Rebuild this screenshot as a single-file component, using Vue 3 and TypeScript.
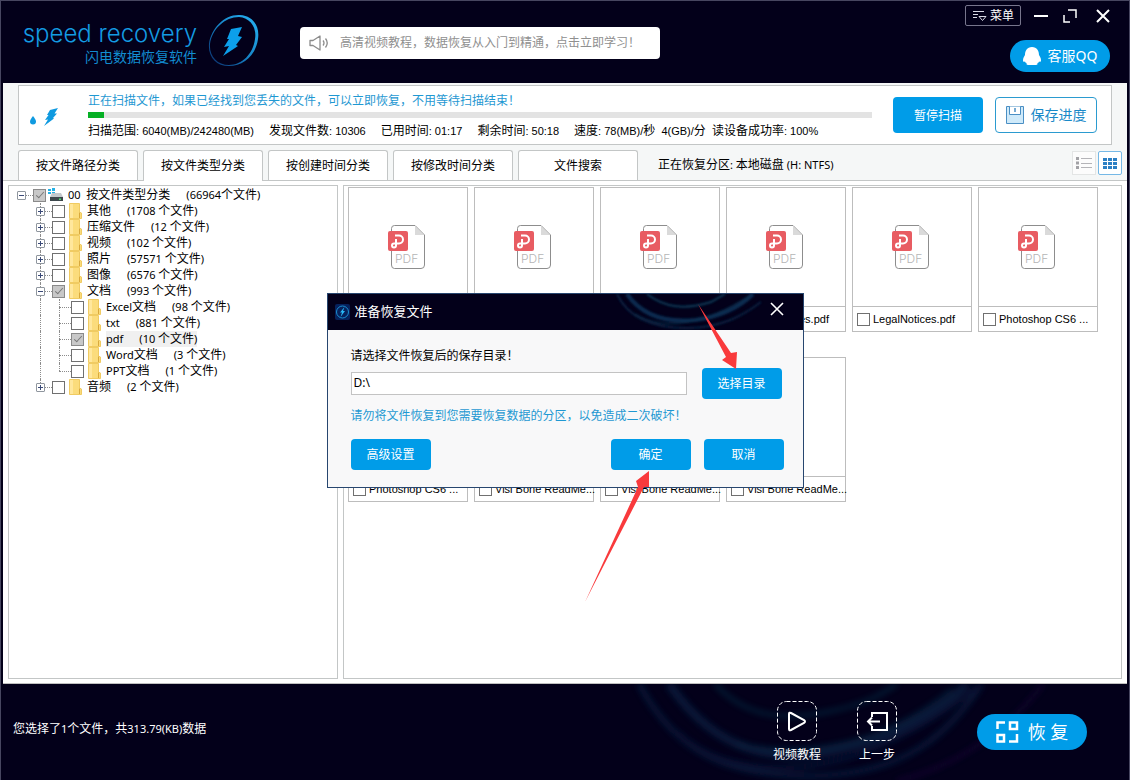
<script setup lang="ts">
import { ref, h, type FunctionalComponent } from 'vue'

interface TreeRow {
  level: number
  name: string
  count: string
  checked?: boolean
  open?: boolean
  selected?: boolean
  last?: boolean
}

/* Latin runs are set one size smaller than the Chinese text around them. */
const Mixed: FunctionalComponent<{ text: string }> = (props) =>
  h(
    'span',
    { class: 'mixed' },
    props.text
      .split(/([\x20-\x7e]+)/)
      .filter((part) => part.length > 0)
      .map((part) => h('span', { class: /^[\x20-\x7e]/.test(part) ? 'latin' : 'han' }, part)),
  )
Mixed.props = ['text']

const tree = ref<TreeRow[]>([
  { level: 0, name: '00  按文件类型分类', count: '(66964个文件)', checked: true, open: true },
  { level: 1, name: '其他', count: '(1708 个文件)' },
  { level: 1, name: '压缩文件', count: '(12 个文件)' },
  { level: 1, name: '视频', count: '(102 个文件)' },
  { level: 1, name: '照片', count: '(57571 个文件)' },
  { level: 1, name: '图像', count: '(6576 个文件)' },
  { level: 1, name: '文档', count: '(993 个文件)', checked: true, open: true },
  { level: 2, name: 'Excel文档', count: '(98 个文件)' },
  { level: 2, name: 'txt', count: '(881 个文件)' },
  { level: 2, name: 'pdf', count: '(10 个文件)', checked: true, selected: true },
  { level: 2, name: 'Word文档', count: '(3 个文件)' },
  { level: 2, name: 'PPT文档', count: '(1 个文件)', last: true },
  { level: 1, name: '音频', count: '(2 个文件)', last: true },
])

const stats = [
  '扫描范围: 6040(MB)/242480(MB)',
  '发现文件数: 10306',
  '已用时间: 01:17',
  '剩余时间: 50:18',
  '速度: 78(MB)/秒  4(GB)/分  读设备成功率: 100%',
]

const tabs = ['按文件路径分类', '按文件类型分类', '按创建时间分类', '按修改时间分类', '文件搜索']
const activeTab = ref(1)

const files = [
  '',
  '',
  '',
  'LegalNotices.pdf',
  'LegalNotices.pdf',
  'Photoshop CS6 ...',
  'Photoshop CS6 ...',
  'Visi Bone ReadMe...',
  'Visi Bone ReadMe...',
  'Visi Bone ReadMe...',
]

const savePath = ref('D:\\')
const progress = 2
</script>

<template>
  <div class="window">
    <header class="top">
      <div class="brand">
        <div class="brand-text">
          <div class="brand-name">speed recovery</div>
          <div class="brand-sub">闪电数据恢复软件</div>
        </div>
        <svg class="brand-mark" viewBox="0 0 54 54" aria-hidden="true">
          <defs>
            <linearGradient id="ring" x1="1" y1="0" x2="0.1" y2="0.9">
              <stop offset="0" stop-color="#27b4f4" />
              <stop offset="0.6" stop-color="#1581c4" />
              <stop offset="1" stop-color="#0c3a78" />
            </linearGradient>
          </defs>
          <path fill="url(#ring)" fill-rule="evenodd" d="M33 1C46 2 53 12 51 25C49 41 36 52 22 52C9 52 1 43 2 30C4 14 18 0 33 1ZM32 3C18 3 5 15 3 30C2 42 10 51 22 51C35 51 46 40 48 25C50 13 43 4 32 3Z" />
          <path fill="#0c9fea" d="M24 15L35 13L31 22L35 23L29 31L31 32L16 42L22 32L17 33L22 25L20 25Z" />
        </svg>
      </div>
      <a class="notice" href="#">
        <svg width="20" height="16" viewBox="0 0 20 16" fill="none" stroke="#8b8b8b" stroke-width="1.3" aria-hidden="true">
          <path d="M1 5.500H4L11 1V15L4 10.500H1Z" stroke-linejoin="round" />
          <path d="M14 5.500Q16 8 14 10.500M16.500 3.500Q20 8 16.500 12.500" />
        </svg>
        <span>高清视频教程，数据恢复从入门到精通，点击立即学习！</span>
      </a>
      <div class="top-right">
        <div class="controls">
          <button class="menu" type="button">
            <svg width="15" height="13" viewBox="0 0 15 13" fill="none" stroke="#d8d8e4" aria-hidden="true">
              <path d="M1 2.500H12M1 5.500H6M1 8.500H5" />
              <path d="M7 7.500H14L10.500 11.500Z" />
            </svg>
            菜单
          </button>
          <button class="ctl" type="button" aria-label="最小化">
            <svg width="14" height="14" viewBox="0 0 14 14"><path d="M0 7H14" stroke="#fff" stroke-width="2" /></svg>
          </button>
          <button class="ctl" type="button" aria-label="最大化">
            <svg width="14" height="14" viewBox="0 0 14 14" fill="none" stroke="#fff" stroke-width="1.5"><path d="M5 1H13V9M1 6V13H7" /></svg>
          </button>
          <button class="ctl" type="button" aria-label="关闭">
            <svg width="14" height="14" viewBox="0 0 14 14"><path d="M1 1L13 13M13 1L1 13" stroke="#fff" stroke-width="2" /></svg>
          </button>
        </div>
        <button class="qq" type="button">
          <svg width="18" height="18" viewBox="0 0 18 18" fill="#fff" aria-hidden="true">
            <path d="M9 0C4 0 2 4 2 8C1 10 0 11 0 13.500C0 15 1 15 2 14.500Q2 15.500 3.500 16Q3 18 5 18H13Q15 18 14.500 16Q16 15.500 16 14.500C17 15 18 15 18 13.500C18 11 17 10 16 8C16 4 14 0 9 0Z" />
          </svg>
          <span>客服QQ</span>
        </button>
      </div>
    </header>

    <main class="content">
      <section class="scan">
        <svg class="scan-icon" width="29" height="19" viewBox="0 0 29 19" fill="#0f9ae0" aria-hidden="true">
          <path d="M3 8Q6 11.500 6 13.500A3 3 0 0 1 0 13.500Q0 11.500 3 8Z" />
          <path d="M20 2L28 0L24.500 5.500H27L23 10L24 10.500L14 18L18 11.500L15 12L18.500 7H17Z" />
        </svg>
        <div class="scan-info">
          <p class="scan-title">正在扫描文件，如果已经找到您丢失的文件，可以立即恢复，不用等待扫描结束！</p>
          <div class="bar"><div class="bar-fill" :style="{ width: progress + '%' }"></div></div>
          <div class="stats"><Mixed v-for="s in stats" :key="s" :text="s" /></div>
        </div>
        <button class="primary pause" type="button">暂停扫描</button>
        <button class="save" type="button">
          <svg width="18" height="18" viewBox="0 0 18 18" fill="#cfeafa" stroke="#4a8fc4" aria-hidden="true">
            <path d="M0.500 0.500H17.500V17.500H0.500Z" />
            <path d="M3.500 0.500V8.500H14.500V0.500" fill="#fff" />
            <path d="M9 2V6" stroke-width="1.500" />
          </svg>
          <span>保存进度</span>
        </button>
      </section>

      <nav class="tabs">
        <button v-for="(t, i) in tabs" :key="t" type="button" class="tab" :class="{ active: i === activeTab }" @click="activeTab = i">{{ t }}</button>
        <span class="partition"><Mixed text="正在恢复分区: 本地磁盘 (H: NTFS)" /></span>
        <div class="views">
          <button type="button" class="view" aria-label="列表">
            <svg width="16" height="12" viewBox="0 0 16 12" aria-hidden="true">
              <path d="M0 0H3V3H0ZM0 4.500H3V7.500H0ZM0 9H3V12H0Z" fill="#a2a2a6" />
              <path d="M5 1.500H16M5 6.500H16M5 10.500H16" stroke="#b4b4b8" />
            </svg>
          </button>
          <button type="button" class="view on" aria-label="图标">
            <svg width="14" height="11" viewBox="0 0 14 11" fill="#2b7fc4" aria-hidden="true">
              <path d="M0 0H4V3H0ZM5 0H9V3H5ZM10 0H14V3H10ZM0 4H4V7H0ZM5 4H9V7H5ZM10 4H14V7H10ZM0 8H4V11H0ZM5 8H9V11H5ZM10 8H14V11H10Z" />
            </svg>
          </button>
        </div>
      </nav>

      <div class="panes">
        <div class="tree">
          <div v-for="row in tree" :key="row.name" class="row" :class="'level' + row.level">
            <span v-if="row.level === 2" class="guide"></span>
            <span class="join" :class="{ last: row.last, root: row.level === 0 }">
              <button v-if="row.level < 2" type="button" class="toggle" :class="{ open: row.open }" :aria-label="'展开 ' + row.name"></button>
            </span>
            <label class="node">
              <input v-model="row.checked" type="checkbox" class="check" />
              <svg v-if="row.level === 0" class="disk" width="16" height="14" viewBox="0 0 16 14" aria-hidden="true">
                <path d="M0 1H3V3H0ZM4 0H7V3H4ZM0 4H3V6H0ZM4 4H7V7H4Z" fill="#22b1e6" />
                <path d="M4 5H13L15 9H2Z" fill="#c3c8cc" />
                <path d="M2 9H15V13H2Z" fill="#3d474c" />
                <path d="M11 10.500H13V12H11Z" fill="#48e070" />
              </svg>
              <svg v-else class="folder" width="13" height="16" viewBox="0 0 13 16" aria-hidden="true">
                <path d="M0.500 0.500H10.500V9L12.500 10V15.500H0.500Z" fill="#fbdc7c" stroke="#f0cb62" />
                <path d="M1 1H4V15H1Z" fill="#ffe79d" />
                <path d="M10.500 9.500V15" stroke="#d9a93c" />
              </svg>
              <span class="caption" :class="{ selected: row.selected }">
                <Mixed :text="row.name" /><Mixed :text="row.count" />
              </span>
            </label>
          </div>
        </div>

        <div class="files">
          <article v-for="(f, i) in files" :key="i" class="file">
            <div class="thumb">
              <svg width="38" height="46" viewBox="0 0 38 46" aria-hidden="true">
                <path d="M6.500 1.500H27L36.500 11V41Q36.500 44.500 33 44.500H6.500Q3.500 44.500 3.500 41V4.500Q3.500 1.500 6.500 1.500Z" fill="#fff" stroke="#8d8d8d" />
                <path d="M27 2V11H36Z" fill="#dadada" />
                <rect x="0" y="7" width="20" height="20" rx="2" fill="#e85c62" />
                <path d="M7 11.500H11A4 4 0 0 1 11 19.500H6A2 2 0 1 0 8 21.500V15" fill="none" stroke="#fff" stroke-width="2" />
                <text x="7" y="39" class="pdf-word">PDF</text>
              </svg>
            </div>
            <label class="file-name"><input type="checkbox" class="check" /><span>{{ f }}</span></label>
          </article>
        </div>
      </div>
    </main>

    <footer class="bottom">
      <svg class="swirl" width="530" height="97" viewBox="0 0 530 97" fill="none" aria-hidden="true">
        <defs><filter id="soft"><feGaussianBlur stdDeviation="3" /></filter></defs>
        <g filter="url(#soft)" opacity="0.6">
          <path d="M42 0C80 70 130 92 215 92C310 90 350 50 385 0" stroke="#0b2c50" stroke-width="5" />
          <path d="M72 0C120 70 180 80 240 66C300 55 350 20 370 0" stroke="#0a2a50" stroke-width="8" />
          <path d="M118 0C150 35 190 36 230 28C270 20 285 10 300 0" stroke="#0d4359" stroke-width="3" />
          <path d="M80 48C130 98 230 90 290 58C330 40 350 25 385 0" stroke="#071d43" stroke-width="5" />
          <path d="M140 60C210 75 290 60 355 5" stroke="#0e4866" stroke-width="2" />
          <path d="M300 97C370 80 420 35 446 0" stroke="#34185a" stroke-width="2" />
        </g>
      </svg>
      <p class="picked"><Mixed text="您选择了1个文件，共313.79(KB)数据" /></p>
      <div class="actions">
        <button class="step" type="button">
          <svg width="40" height="40" viewBox="0 0 40 40" fill="none" stroke="#fff" aria-hidden="true">
            <rect x="0.500" y="0.500" width="39" height="39" rx="9" stroke-dasharray="4 2" />
            <path d="M12 13V28Q12 30 14 29L27 22Q29 20.500 27 19L14 12Q12 11 12 13Z" stroke-width="2" />
          </svg>
          <span>视频教程</span>
        </button>
        <button class="step" type="button">
          <svg width="40" height="40" viewBox="0 0 40 40" fill="none" stroke="#fff" aria-hidden="true">
            <rect x="0.500" y="0.500" width="39" height="39" rx="9" stroke-dasharray="4 2" />
            <path d="M15 16V12H30V29H15V25M23 20.500H11M15 16.500L11 20.500L15 24.500" stroke-width="2" />
          </svg>
          <span>上一步</span>
        </button>
      </div>
      <button class="recover" type="button">
        <svg width="23" height="22" viewBox="0 0 23 22" fill="none" stroke="#fff" stroke-width="2.500" aria-hidden="true">
          <path d="M1.500 8V1.500H9M14 1.500H21V8H14ZM1.500 14H8V20.500H1.500ZM21 13V20.500H13" />
        </svg>
        <span>恢 复</span>
      </button>
    </footer>

    <div class="overlay">
      <div class="dialog" role="dialog" aria-labelledby="dialog-title">
        <div class="dialog-head">
          <svg class="swirl" width="150" height="36" viewBox="0 0 150 36" fill="none" aria-hidden="true">
            <defs><filter id="faint"><feGaussianBlur stdDeviation="1" /></filter></defs>
            <g filter="url(#faint)" opacity="0.8">
              <path d="M2 0C15 28 45 34 72 34C108 34 130 20 146 8" stroke="#0a2b4c" stroke-width="2" />
              <path d="M12 0C30 26 60 28 80 26C110 22 128 10 138 0" stroke="#0c385f" stroke-width="4" />
              <path d="M32 0C50 14 70 16 96 8L110 0" stroke="#0f4a66" stroke-width="2" />
              <path d="M20 20C50 38 90 30 134 2" stroke="#0e4564" />
            </g>
          </svg>
          <svg width="15" height="16" viewBox="0 0 15 16" aria-hidden="true">
            <rect width="15" height="16" rx="2" fill="#06215c" />
            <ellipse cx="7.500" cy="8" rx="6" ry="6" fill="none" stroke="#1a8ed0" />
            <path d="M9.500 3L5 8.500H7L5.500 13L10 7H8Z" fill="#29b8f5" />
          </svg>
          <h2 id="dialog-title">准备恢复文件</h2>
          <button type="button" class="dialog-close" aria-label="关闭">
            <svg width="14" height="14" viewBox="0 0 14 14"><path d="M1 1L13 13M13 1L1 13" stroke="#fff" stroke-width="1.600" /></svg>
          </button>
        </div>
        <div class="dialog-body">
          <label class="ask" for="save-path">请选择文件恢复后的保存目录！</label>
          <div class="path-line">
            <input id="save-path" v-model="savePath" type="text" class="path" />
            <button type="button" class="primary small">选择目录</button>
          </div>
          <p class="warn">请勿将文件恢复到您需要恢复数据的分区，以免造成二次破坏！</p>
          <div class="dialog-actions">
            <button type="button" class="primary small advanced">高级设置</button>
            <button type="button" class="primary small">确定</button>
            <button type="button" class="primary small">取消</button>
          </div>
        </div>
        <svg class="arrows" width="477" height="312" viewBox="0 0 477 312" fill="#f93a3c" aria-hidden="true">
          <path d="M370 10L403 59L409 58L408 75L394 66L398 63Z" />
          <path d="M257 308L310 193L308 187L321 177L321 193L316 193Z" />
        </svg>
      </div>
    </div>
  </div>
</template>

<style>
html,
body {
  margin: 0;
  background: #03001a;
}
.mixed {
  white-space: pre;
}
.mixed .latin {
  font-size: 11px;
}
.stats .latin {
  font-family: "Liberation Sans", sans-serif;
}
</style>

<style scoped>
.window {
  position: relative;
  box-sizing: border-box;
  display: flex;
  flex-direction: column;
  min-height: 100vh;
  padding: 0 2px;
  border: 1px solid #474660;
  border-bottom: 0;
  background: #03001a;
  color: #000;
  font: 12px/16px "Noto Sans", "Noto Sans CJK SC", sans-serif;
}
p,
h2 {
  margin: 0;
  font-weight: 400;
}
button {
  margin: 0;
  padding: 0;
  border: 0;
  background: none;
  color: inherit;
  font: inherit;
  cursor: pointer;
}
svg {
  display: block;
  flex: none;
}
.top {
  display: flex;
  align-items: flex-start;
  height: 82px;
  color: #fff;
}
.brand {
  display: flex;
  width: 297px;
  flex: none;
  padding: 13px 0 0 21px;
  box-sizing: border-box;
}
.brand-text {
  display: flex;
  flex-direction: column;
  align-items: flex-end;
  width: 173px;
  padding-top: 5px;
  white-space: nowrap;
  color: #139be2;
}
.brand-name {
  font: 300 24px/30px Inter, sans-serif;
}
.brand-sub {
  font-size: 14px;
  line-height: 16px;
  color: #128cd0;
}
.brand-mark {
  width: 54px;
  height: 54px;
  margin-left: 10px;
}
.notice {
  display: flex;
  align-items: center;
  gap: 11px;
  width: 360px;
  height: 32px;
  margin-top: 26px;
  padding-left: 9px;
  box-sizing: border-box;
  border-radius: 4px;
  background: #fff;
  color: #8f8f8f;
  text-decoration: none;
  white-space: nowrap;
}
.top-right {
  display: flex;
  flex-direction: column;
  align-items: flex-end;
  gap: 14px;
  margin-left: auto;
  padding: 4px 17px 0 0;
}
.controls {
  display: flex;
  align-items: center;
  gap: 13px;
}
.ctl + .ctl {
  margin-left: 2px;
}
.ctl:last-child {
  margin-left: 6px;
}
.menu {
  display: flex;
  align-items: center;
  justify-content: center;
  gap: 3px;
  width: 56px;
  height: 21px;
  border: 1px solid #77758c;
  border-radius: 2px;
}
.qq {
  display: flex;
  align-items: center;
  justify-content: center;
  gap: 7px;
  width: 100px;
  height: 32px;
  border-radius: 16px;
  background: #009ce8;
  font-size: 14px;
}
.content {
  display: flex;
  flex: 1;
  flex-direction: column;
  border-bottom: 1px solid #c0c0c0;
  background: #f5f7f7;
}
.scan {
  display: flex;
  align-items: center;
  height: 60px;
  margin: 2px 15px 5px;
  padding: 0 14px 0 11px;
  box-sizing: border-box;
  border: 1px solid #c3c6c6;
  background: #fff;
}
.scan-icon {
  margin: 4px 29px 0 0;
}
.scan-info {
  flex: 1;
  white-space: nowrap;
}
.scan-title {
  padding-top: 1px;
  color: #1f98d2;
}
.bar {
  height: 6px;
  margin: 3px 0 5px;
  background: #e3e3e3;
}
.bar-fill {
  height: 6px;
  background: #06b025;
}
.stats {
  display: flex;
  gap: 15px;
}
.primary {
  padding-top: 1px;
  border-radius: 4px;
  background: #009ce8;
  color: #fff;
}
.pause {
  width: 90px;
  height: 36px;
  margin: 0 12px 0 21px;
}
.save {
  display: flex;
  align-items: center;
  justify-content: center;
  gap: 7px;
  width: 102px;
  height: 36px;
  border: 1px solid #2b9bd0;
  border-radius: 4px;
  color: #1989c8;
  font-size: 14px;
}
.tabs {
  display: flex;
  gap: 5px;
  height: 31px;
  padding: 0 5px 0 15px;
  border-bottom: 1px solid #c3c6c6;
  box-sizing: border-box;
}
.tab {
  width: 120px;
  height: 30px;
  border: 1px solid #c3c6c6;
  border-bottom: 0;
  border-radius: 3px 3px 0 0;
  background: #fff;
}
.tab.active {
  height: 31px;
}
.partition {
  padding: 7px 0 0 15px;
}
.views {
  display: flex;
  gap: 2px;
  margin-left: auto;
}
.view {
  display: flex;
  align-items: center;
  justify-content: center;
  width: 24px;
  height: 24px;
  margin-top: 1px;
  border: 1px solid #e3e5e5;
  background: #fcfcfc;
}
.view.on {
  border-color: #75b8e6;
  border-radius: 2px;
  background: #fff;
}
.panes {
  display: grid;
  grid-template-columns: 330px 1fr;
  flex: 1;
  gap: 5px;
  padding: 4px 5px;
  background: #fff;
}
.tree {
  padding: 1px 0 0 8px;
  border: 1px solid #c3c6c6;
  box-sizing: border-box;
}
.row {
  display: flex;
  align-items: center;
  height: 16px;
}
.level1,
.level2 {
  padding-left: 19px;
}
.guide {
  width: 19px;
  height: 16px;
  box-sizing: border-box;
  border-left: 1px dotted #8c8c8c;
  margin-left: 4px;
  margin-right: -4px;
}
.join {
  display: grid;
  grid-template: 8px 8px / 4px 12px;
  width: 16px;
  height: 16px;
}
.join::before {
  grid-area: 1 / 2 / 3 / 3;
  border-left: 1px dotted #8c8c8c;
  content: "";
}
.join.last::before {
  grid-area: 1 / 2 / 2 / 3;
}
.join.root::before {
  display: none;
}
.join::after {
  grid-area: 2 / 2 / 3 / 3;
  border-top: 1px dotted #8c8c8c;
  content: "";
}
.toggle {
  z-index: 1;
  grid-area: 1 / 1 / 3 / 3;
  align-self: center;
  width: 9px;
  height: 9px;
  border: 1px solid #8f969e;
  border-radius: 1px;
  background:
    linear-gradient(#3a4a78, #3a4a78) center / 5px 1px no-repeat,
    linear-gradient(#3a4a78, #3a4a78) center / 1px 5px no-repeat,
    #fff;
}
.toggle.open {
  background: linear-gradient(#3a4a78, #3a4a78) center / 5px 1px no-repeat, #fff;
}
.node {
  display: flex;
  align-items: center;
  white-space: nowrap;
}
.check {
  display: grid;
  place-items: center;
  flex: none;
  width: 13px;
  height: 13px;
  margin: 0;
  border: 1px solid #707070;
  background: #fff;
  appearance: none;
}
.check:checked {
  border-color: #8a8a8a;
  background: #c8c8c8;
}
.check:checked::after {
  width: 3px;
  height: 7px;
  margin-bottom: 2px;
  border: solid #777;
  border-width: 0 1px 1px 0;
  transform: rotate(42deg);
  content: "";
}
.disk {
  margin: 0 4px 0 2px;
}
.folder {
  margin: 0 5px 0 4px;
}
.caption {
  display: flex;
  gap: 16px;
  height: 16px;
}
.caption.selected {
  background: #f0f0f0;
}
.files {
  display: grid;
  grid-template-columns: repeat(auto-fill, 120px);
  align-content: start;
  gap: 25px 6px;
  padding: 1px 4px;
  border: 1px solid #c3c6c6;
}
.file {
  height: 145px;
  box-sizing: border-box;
  border: 1px solid #bdbdbd;
}
.thumb {
  display: flex;
  align-items: center;
  justify-content: center;
  height: 118px;
  border-bottom: 1px solid #bdbdbd;
}
.thumb svg {
  margin-right: 2px;
}
.pdf-word {
  fill: #b5b5b5;
  font: 300 12px Inter, sans-serif;
}
.file-name {
  display: flex;
  align-items: center;
  gap: 3px;
  height: 24px;
  padding-left: 4px;
  font-family: "Liberation Sans", sans-serif;
  font-size: 11px;
  white-space: nowrap;
}
.bottom {
  position: relative;
  display: flex;
  align-items: center;
  height: 96px;
  padding: 0 40px 0 10px;
  color: #fff;
}
.swirl {
  position: absolute;
  top: 0;
  right: 0;
}
.picked {
  flex: 1;
  padding-bottom: 6px;
}
.actions {
  position: relative;
  display: flex;
  margin-right: 60px;
}
.step {
  display: flex;
  flex-direction: column;
  align-items: center;
  gap: 6px;
  width: 80px;
}
.recover {
  position: relative;
  display: flex;
  align-items: center;
  justify-content: center;
  gap: 9px;
  width: 110px;
  height: 36px;
  border-radius: 18px;
  background: #009ce8;
  font-size: 18px;
}
.overlay {
  position: absolute;
  inset: 0;
  display: flex;
  align-items: center;
  justify-content: center;
  pointer-events: none;
}
.dialog {
  position: relative;
  width: 477px;
  box-sizing: border-box;
  border: 1px solid #27466f;
  background: #f8f8f9;
  pointer-events: auto;
}
.dialog-head {
  position: relative;
  display: flex;
  align-items: center;
  gap: 5px;
  height: 36px;
  padding: 0 19px 0 7px;
  background: #03001a;
  color: #fff;
}
.dialog-head .swirl {
  right: 38px;
}
.dialog-head h2 {
  flex: 1;
  padding-bottom: 2px;
  font-size: 13px;
}
.dialog-close {
  position: relative;
  padding-bottom: 6px;
}
.dialog-body {
  padding: 18px 19px 17px 23px;
}
.ask {
  display: block;
  margin-bottom: 4px;
}
.path-line {
  display: flex;
  align-items: center;
  gap: 15px;
  padding-right: 2px;
}
.path {
  flex: 1;
  height: 23px;
  min-width: 0;
  padding: 0 2px 3px;
  box-sizing: border-box;
  border: 1px solid #c3c3c3;
  background: #fff;
  font: inherit;
}
.small {
  width: 80px;
  height: 31px;
}
.warn {
  margin: 9px 0 15px;
  color: #1f98d2;
}
.dialog-actions {
  display: flex;
  gap: 13px;
}
.advanced {
  margin-right: auto;
}
.arrows {
  position: absolute;
  top: 0;
  left: 0;
  pointer-events: none;
}
</style>
